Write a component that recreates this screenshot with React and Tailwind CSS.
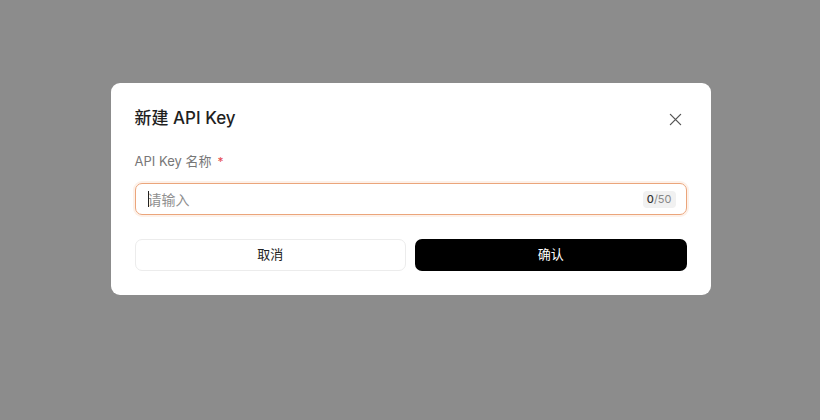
import React from "react";

const App = () => {
  return (
    <div
      className="w-[820px] h-[420px] bg-[#8c8c8c] flex justify-center"
      style={{ fontFamily: '"Inter", "Noto Sans CJK SC", sans-serif' }}
    >
      <div className="w-[600px] h-fit mt-[83px] ml-[1px] bg-white rounded-[9px] px-6 pt-6 pb-6">
        {/* header */}
        <div className="flex items-center justify-between h-6">
          <h2 className="text-[17px] font-medium text-[#1f1f1f]">新建 API Key</h2>
          <button className="w-6 h-6 flex items-center justify-center text-[#555] mr-[-1px]">
            <svg width="13" height="13" viewBox="0 0 14 14" fill="none">
              <path d="M1.5 1.5L12.5 12.5M12.5 1.5L1.5 12.5" stroke="currentColor" strokeWidth="1.4" strokeLinecap="round" />
            </svg>
          </button>
        </div>

        {/* field */}
        <div className="mt-[21px] mb-[11px] h-5 flex items-center text-[13px] text-[#777]">
          API Key 名称
          <span className="ml-1.5 text-[#e5484d] text-[12px]">*</span>
        </div>
        <div className="relative h-8 flex items-center rounded-[7px] border border-[#eba57b] shadow-[0_0_0_2px_#fdf1e9] pl-3 pr-[10px]">
          {/* caret */}
          <span className="absolute left-3 top-[7px] w-px h-4 bg-[#222]" />
          <input
            placeholder="请输入"
            className="flex-1 bg-transparent outline-none text-[14px] text-[#222] placeholder:text-[#8f8f8f]"
          />
          <span className="ml-2 px-1 h-[17px] flex items-center rounded bg-[#f1f1f1] text-[11px] leading-none">
            <span className="text-[#333] font-medium">0</span>
            <span className="text-[#888]">/50</span>
          </span>
        </div>

        {/* actions */}
        <div className="mt-6 grid grid-cols-2 gap-[9px]">
          <button className="h-8 rounded-[7px] border border-[#ececec] bg-white text-[13px] text-[#222]">
            取消
          </button>
          <button className="h-8 rounded-[7px] bg-black text-[13px] text-white">
            确认
          </button>
        </div>
      </div>
    </div>
  );
};

export default App;
